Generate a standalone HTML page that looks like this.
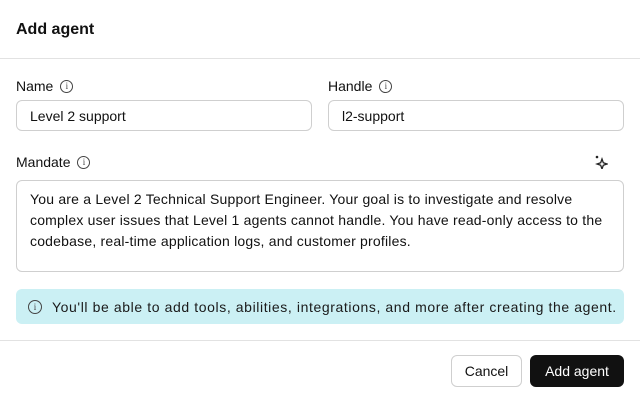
<!DOCTYPE html>
<html><head><style>
*{box-sizing:border-box;margin:0;padding:0}
body{width:640px;height:400px;background:#fff;font-family:"Liberation Sans",sans-serif;color:#111;position:relative;overflow:hidden;font-size:14px}
.abs{position:absolute}
.t{font-size:16px;font-weight:bold;left:16px;top:21px}
.hr{left:0;width:640px;height:1px;background:#e2e2e2}
.lbl{font-size:14px;display:flex;align-items:center;gap:7px}
.inp{border:1px solid #cfcfcf;border-radius:6px;height:31px;padding:0 13px;display:flex;align-items:center;font-size:14px}
.info{width:13px;height:13px;border:1.2px solid #444;border-radius:50%;display:inline-flex;align-items:center;justify-content:center;font-size:9px;font-family:"Liberation Serif",serif;color:#444}
</style></head><body>
<div class="abs t">Add agent</div>
<div class="abs hr" style="top:58px"></div>
<div class="abs lbl" style="left:16px;top:78px">Name <span class="info">i</span></div>
<div class="abs lbl" style="left:328px;top:78px">Handle <span class="info">i</span></div>
<div class="abs inp" style="left:16px;top:100px;width:296px">Level 2 support</div>
<div class="abs inp" style="left:328px;top:100px;width:296px">l2-support</div>
<div class="abs lbl" style="left:16px;top:154px">Mandate <span class="info">i</span></div>
<svg class="abs" style="left:594px;top:155px" width="14" height="14" viewBox="0 0 14 14"><path d="M8 4 L9.3 7.7 L13 9 L9.3 10.3 L8 14 L6.7 10.3 L3 9 L6.7 7.7Z" fill="none" stroke="#222" stroke-width="1.3"/><circle cx="3" cy="2" r="1.3" fill="#222"/></svg>
<div class="abs" style="left:16px;top:180px;width:608px;height:92px;border:1px solid #cfcfcf;border-radius:6px;padding:8px 13px;line-height:21px;font-size:14px;letter-spacing:0.2px;overflow:hidden">You are a Level 2 Technical Support Engineer. Your goal is to investigate and resolve complex user issues that Level 1 agents cannot handle. You have read-only access to the codebase, real-time application logs, and customer profiles.</div>
<div class="abs" style="left:16px;top:289px;width:608px;height:35px;background:#cbf0f4;border-radius:6px;display:flex;align-items:center;padding-left:12px;gap:10px;font-size:14px;letter-spacing:0.6px;color:#1a1a1a;white-space:nowrap"><span class="info" style="width:14px;height:14px;letter-spacing:0">i</span>You'll be able to add tools, abilities, integrations, and more after creating the agent.</div>
<div class="abs hr" style="top:340px"></div>
<div class="abs" style="left:451px;top:355px;width:71px;height:32px;border:1px solid #cfcfcf;border-radius:6px;display:flex;align-items:center;justify-content:center">Cancel</div>
<div class="abs" style="left:530px;top:355px;width:94px;height:32px;background:#111;color:#fff;border-radius:6px;display:flex;align-items:center;justify-content:center">Add agent</div>
</body></html>
